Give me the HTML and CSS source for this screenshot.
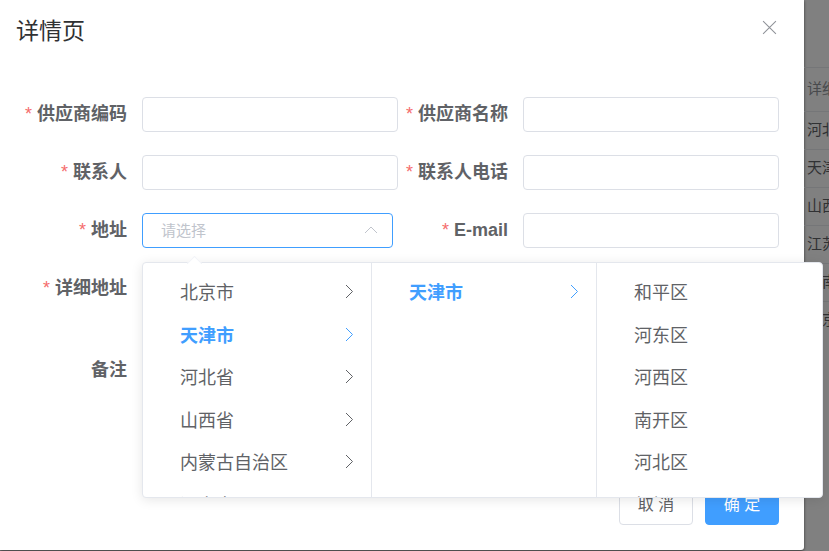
FILE: index.html
```html
<!DOCTYPE html>
<html lang="zh-CN">
<head>
<meta charset="utf-8">
<title>详情页</title>
<link rel="stylesheet" href="styles.css">
</head>
<body>
<svg class="sprite" aria-hidden="true">
  <symbol id="chevron" viewBox="0 0 16 16"><path d="M5 2l6.500 6.500-6.500 6.500"/></symbol>
</svg>
<div class="page">
  <main class="dialog">
    <header class="dialog-header">
      <h1>详情页</h1>
      <button class="close" type="button" aria-label="关闭"><svg viewBox="0 0 14 14"><path d="M1 1l12 12M13 1L1 13"/></svg></button>
    </header>
    <form class="form">
      <div class="row">
        <label class="required" for="code">供应商编码</label><input id="code" type="text">
        <label class="required" for="name">供应商名称</label><input id="name" type="text">
      </div>
      <div class="row">
        <label class="required" for="contact">联系人</label><input id="contact" type="text">
        <label class="required" for="phone">联系人电话</label><input id="phone" type="text">
      </div>
      <div class="row">
        <label class="required" for="region">地址</label>
        <div class="cascader">
          <input id="region" type="text" placeholder="请选择" readonly>
          <svg class="caret" viewBox="0 0 16 16"><path d="M2 11l6-6 6 6"/></svg>
          <div class="panel">
            <ul class="menu">
              <li>北京市<svg><use href="#chevron"/></svg></li>
              <li class="active">天津市<svg><use href="#chevron"/></svg></li>
              <li>河北省<svg><use href="#chevron"/></svg></li>
              <li>山西省<svg><use href="#chevron"/></svg></li>
              <li>内蒙古自治区<svg><use href="#chevron"/></svg></li>
              <li>辽宁省<svg><use href="#chevron"/></svg></li>
            </ul>
            <ul class="menu">
              <li class="active">天津市<svg><use href="#chevron"/></svg></li>
            </ul>
            <ul class="menu">
              <li>和平区</li>
              <li>河东区</li>
              <li>河西区</li>
              <li>南开区</li>
              <li>河北区</li>
              <li>红桥区</li>
            </ul>
          </div>
        </div>
        <label class="required" for="email">E-mail</label><input id="email" type="text">
      </div>
      <div class="row wide">
        <label class="required" for="address">详细地址</label><textarea id="address"></textarea>
      </div>
      <div class="row wide">
        <label for="remark">备注</label><textarea id="remark" class="tall"></textarea>
      </div>
      <footer class="actions">
        <button class="btn" type="button">取 消</button>
        <button class="btn primary" type="submit">确 定</button>
      </footer>
    </form>
  </main>
  <table class="backdrop">
    <thead><tr><th>详细</th></tr></thead>
    <tbody>
      <tr><td>河北</td></tr>
      <tr><td>天津</td></tr>
      <tr><td>山西</td></tr>
      <tr><td>江苏</td></tr>
      <tr><td>河南</td></tr>
      <tr><td>北京</td></tr>
    </tbody>
  </table>
</div>
</body>
</html>
```

FILE: styles.css
```css
* {
  box-sizing: border-box;
}

body {
  margin: 0;
  min-height: 100vh;
  background: #808080;
  color: #606266;
  font-family: "Liberation Sans", "Noto Sans CJK SC", sans-serif;
  font-size: 18px;
  overflow-x: hidden;
}

.sprite {
  position: absolute;
  width: 0;
  height: 0;
}

svg {
  display: block;
  fill: none;
  stroke: currentColor;
}

.page {
  display: flex;
  align-items: flex-start;
  padding-bottom: 1px;
}

.dialog {
  flex: 1;
  min-width: 0;
  padding: 16px 25px 25px 16px;
  background: #fff;
  border-radius: 0 0 3px 0;
  box-shadow: 0 1px 3px rgba(0, 0, 0, 0.6);
}

.dialog-header {
  display: flex;
  justify-content: space-between;
  align-items: flex-start;
  height: 81px;
}

h1 {
  margin: 0;
  color: #303133;
  font-size: 23px;
  font-weight: 400;
  line-height: 30px;
}

.close {
  padding: 4px 2px;
  border: 0;
  background: none;
  color: #909399;
}

.close svg {
  width: 15px;
  height: 15px;
}

.row {
  display: grid;
  grid-template-columns: 111px 1fr 95px 1fr;
  column-gap: 15px;
  margin-bottom: 23px;
}

.row label {
  line-height: 35px;
  font-weight: 700;
  text-align: right;
  white-space: nowrap;
}

.row > label:nth-of-type(2) {
  margin-left: -15px;
}

.required::before {
  content: "*";
  margin-right: 5px;
  color: #f56c6c;
  font-weight: 400;
}

input,
textarea {
  width: 100%;
  min-width: 0;
  height: 35px;
  padding: 0 18px;
  border: 1px solid #dcdfe6;
  border-radius: 4px;
  background: #fff;
  font: inherit;
  font-size: 15px;
  outline: 0;
}

textarea {
  height: 59px;
  resize: none;
}

.tall {
  height: 114px;
}

.wide {
  grid-template-columns: 111px 1fr;
}

.cascader {
  position: relative;
  margin-right: 5px;
}

.cascader input {
  display: block;
  border-color: #409eff;
}

input::placeholder {
  color: #c0c4cc;
}

.caret {
  position: absolute;
  top: 9px;
  right: 14px;
  width: 16px;
  height: 16px;
  color: #c0c4cc;
}

.panel {
  position: absolute;
  z-index: 2;
  top: 49px;
  left: 0;
  display: grid;
  grid-template-columns: 229px 225px 225px;
  height: 236px;
  border: 1px solid #e4e7ed;
  border-radius: 4px;
  background: #fff;
  box-shadow: 0 2px 12px rgba(0, 0, 0, 0.1);
}

.panel::before {
  content: "";
  position: absolute;
  top: -5px;
  left: 46px;
  width: 10px;
  height: 10px;
  border: 1px solid #f2f4f8;
  border-width: 1px 0 0 1px;
  background: #fff;
  transform: rotate(45deg);
}

.menu {
  display: grid;
  grid-template-rows: repeat(6, 1fr);
  height: 262px;
  margin: 0;
  padding: 7px 14px 0 37px;
  border-right: 1px solid #e4e7ed;
  list-style: none;
  clip-path: inset(0 0 28px 0);
}

.menu:last-child {
  border-right: 0;
}

.menu li {
  display: flex;
  align-items: center;
  justify-content: space-between;
  min-height: 0;
}

.menu svg {
  width: 16px;
  height: 16px;
}

.active {
  color: #409eff;
  font-weight: 700;
}

.actions {
  display: flex;
  justify-content: flex-end;
  gap: 12px;
}

.btn {
  width: 74px;
  height: 35px;
  padding: 0 0 5px;
  border: 1px solid #dcdfe6;
  border-radius: 4px;
  background: #fff;
  color: #606266;
  font: inherit;
  font-size: 16px;
  line-height: 24px;
}

.primary {
  border-color: #409eff;
  background: #409eff;
  color: #fff;
}

.backdrop {
  width: 25px;
  margin-top: 67px;
  border-collapse: collapse;
  table-layout: fixed;
  color: #303133;
  font-size: 15px;
}

.backdrop th,
.backdrop td {
  height: 38px;
  padding: 0 0 4px 3px;
  border-top: 1px solid #757678;
  font-weight: 400;
  text-align: left;
  white-space: nowrap;
  overflow: hidden;
}

.backdrop th {
  height: 44px;
  color: #484a4d;
}
```
